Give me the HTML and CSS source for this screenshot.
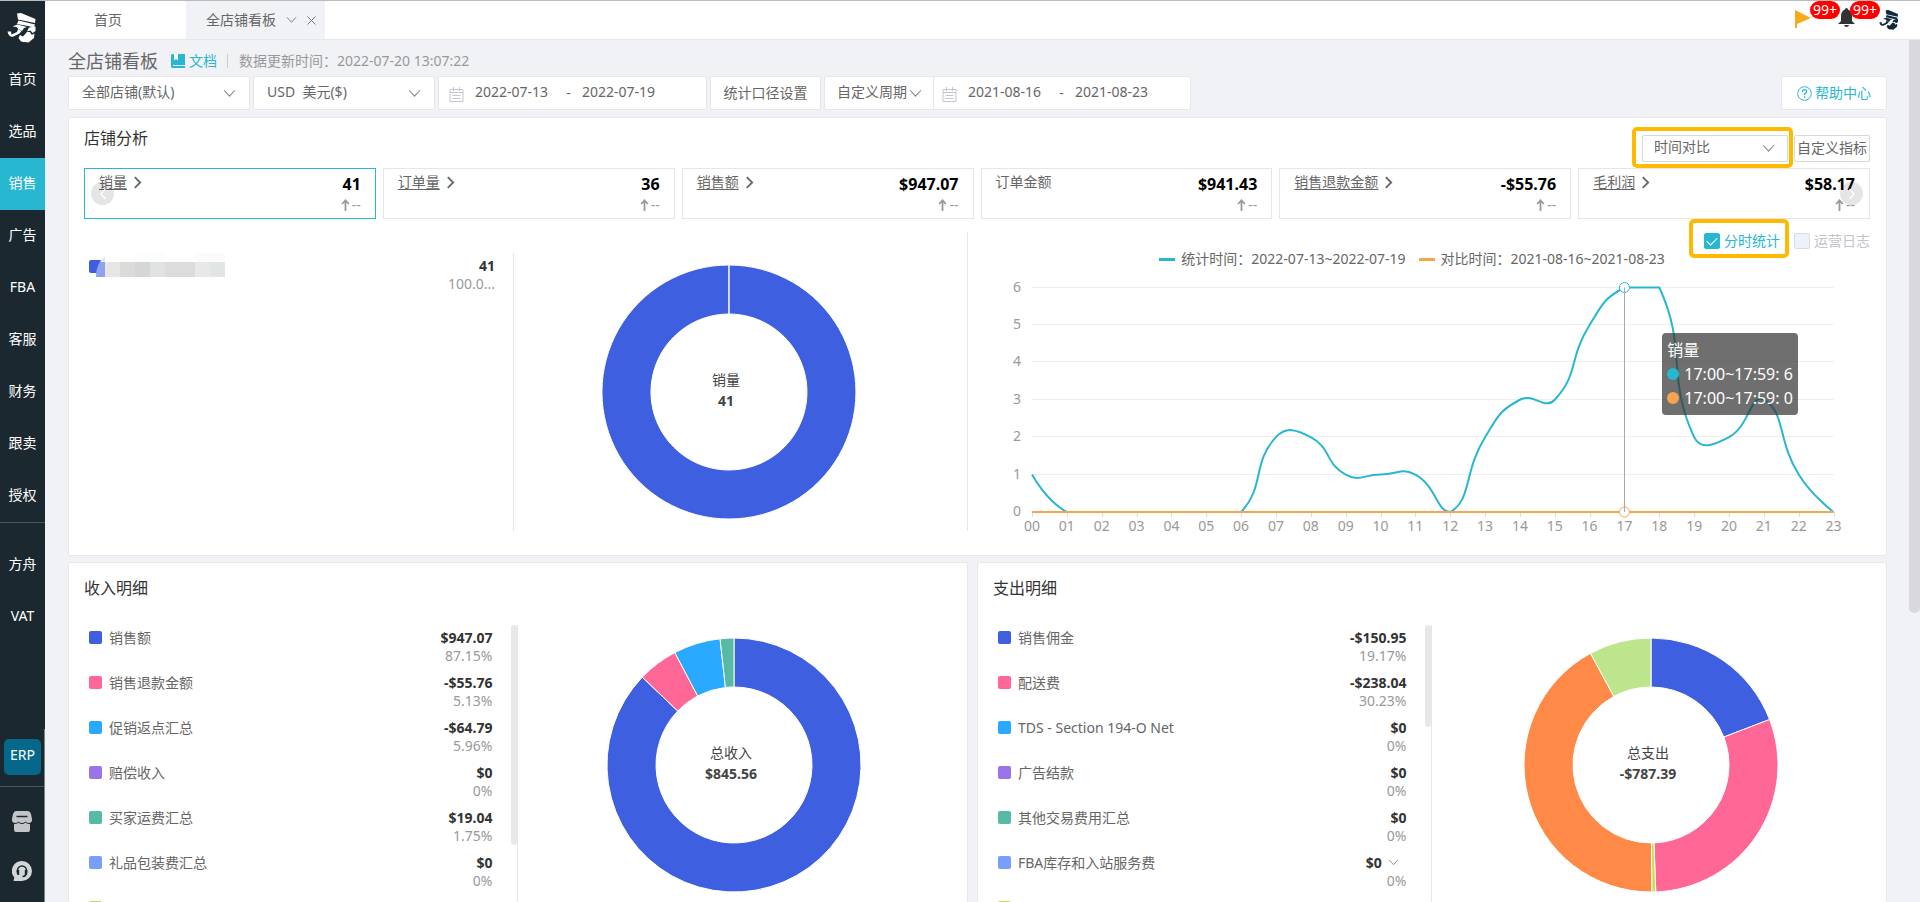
FILE: index.html
```html
<!DOCTYPE html>
<html lang="zh-CN">
<head>
<meta charset="utf-8">
<title>全店铺看板</title>
<link rel="stylesheet" href="styles.css">
</head>
<body>
<svg class="defs" width="0" height="0" aria-hidden="true">
  <symbol id="chevron" viewBox="0 0 12 8"><path d="M1 1l5 5.500l5-5.500" fill="none" stroke="currentColor"/></symbol>
  <symbol id="more" viewBox="0 0 8 12"><path d="M1.500 1l5 5l-5 5" fill="none" stroke="currentColor" stroke-width="1.700"/></symbol>
  <symbol id="up" viewBox="0 0 8 12"><path d="M4 12V1.500M.7 5L4 1.300L7.300 5" fill="none" stroke="currentColor" stroke-width="1.800"/></symbol>
  <symbol id="calendar" viewBox="0 0 15 15"><path d="M1 2.500h13v12H1zM1 5.500h13M4.500 0v4M10.500 0v4M3.500 8.500h8M3.500 11.500h8" fill="none" stroke="currentColor"/></symbol>
  <symbol id="captain" viewBox="0 0 30 30">
    <path fill="currentColor" d="M10 .5L14 0L28.500 6L28 10L11 6.500Z"/>
    <path fill="currentColor" d="M11.500 7.500L28 11.500L27 14.500L21 13L10 11Z"/>
    <path fill="currentColor" d="M5.500 13.500L10.500 11.500L20 14L17 15L15 18L12 16.500L9.500 14Z"/>
    <path fill="currentColor" d="M11 16L14.500 18L12.500 20.500L6.500 23.500C4.500 24.500 1 23 .5 18.500L4 18.500L4.500 21.500L10 19Z"/>
    <path fill="currentColor" d="M22 14.500L28.500 13.500L28.500 18L25.500 20L23.500 17.500L20 18.500Z"/>
    <path fill="currentColor" d="M13 22L16 23.500L20 19L23 19L24.500 22L27.500 20.500L27 25L21.500 29.500L14 28.500L11.500 25Z"/>
    <path d="M16 29L24.500 21.500" stroke="currentColor" stroke-width="1"/>
  </symbol>
</svg>

<nav class="sidebar" aria-label="主菜单">
  <a class="logo" href="#" aria-label="主页"><svg width="30" height="30"><use href="#captain"/></svg></a>
  <a class="nav-item" href="#">首页</a>
  <a class="nav-item" href="#">选品</a>
  <a class="nav-item active" href="#">销售</a>
  <a class="nav-item" href="#">广告</a>
  <a class="nav-item" href="#">FBA</a>
  <a class="nav-item" href="#">客服</a>
  <a class="nav-item" href="#">财务</a>
  <a class="nav-item" href="#">跟卖</a>
  <a class="nav-item" href="#">授权</a>
  <div class="nav-extra">
    <a class="nav-item" href="#">方舟</a>
    <a class="nav-item" href="#">VAT</a>
  </div>
  <div class="nav-foot">
    <a class="erp" href="#">ERP</a>
    <div class="nav-tools">
      <button class="tool" type="button" aria-label="店铺">
        <svg width="20" height="21" viewBox="0 0 20 21"><path fill="#c3c6c9" d="M4 0h12q2 0 3 3l1 5v2q-1 2-3 2q-2 0-3.500-1.500Q12 12 10 12T6.500 10.500Q5 12 3 12Q1 12 0 10V8l1-5q1-3 3-3z"/><path fill="#c3c6c9" d="M2 13q3 0 4.500-1.500Q8 13 10 13t3.500-1.500Q15 13 18 13v6q0 2-2 2H4q-2 0-2-2z"/><path d="M4.500 5.500h11" stroke="#1b2830" stroke-width="1.500"/></svg>
      </button>
      <button class="tool" type="button" aria-label="客服">
        <svg width="20" height="20" viewBox="0 0 20 20"><path fill="#d3d6d8" d="M10 0a10 10 0 1 1 0 20H1.500l.8-3.500A10 10 0 0 1 10 0z"/><path d="M5.500 11V9.500a4.500 4.500 0 0 1 9 0V11c0 3-2 4.500-4 4.500" fill="none" stroke="#1b2830" stroke-width="1.600"/><path d="M4.700 9H7.200v5H6q-1.300-.5-1.300-2zM12.800 9h2.500v3q0 2-1.300 2h-1.200z" fill="#1b2830"/></svg>
      </button>
    </div>
  </div>
</nav>

<div class="shell">
  <header class="topbar">
    <a class="tab" href="#">首页</a>
    <div class="tab current">
      <a href="#">全店铺看板</a>
      <button type="button" aria-label="展开"><svg width="11" height="8"><use href="#chevron"/></svg></button>
      <button type="button" aria-label="关闭"><svg width="9" height="9" viewBox="0 0 9 9"><path d="M.5.5l8 8M8.500.5l-8 8" stroke="currentColor"/></svg></button>
    </div>
    <div class="status">
      <a class="flag" href="#" aria-label="任务"><svg width="16" height="18" viewBox="0 0 16 18"><path fill="#f8a91c" d="M0 0L16 8L2 14V18H0z"/></svg><span class="badge">99+</span></a>
      <a class="bell" href="#" aria-label="通知"><svg width="17" height="19" viewBox="0 0 17 19"><path fill="#333" d="M7 1.500a1.500 1.500 0 0 1 3 0Q14 3 14 8v5l3 3H0l3-3V8Q3 3 7 1.500zM6 17h5q-.5 2-2.500 2T6 17z"/></svg><span class="badge">99+</span></a>
      <a class="avatar" href="#" aria-label="账户"><svg width="20" height="20"><use href="#captain"/></svg></a>
    </div>
  </header>

  <main class="page">
    <div class="page-head">
      <h1>全店铺看板</h1>
      <a class="doc" href="#"><svg width="14" height="14" viewBox="0 0 14 14"><path fill="currentColor" d="M1.500 0H3v6.500l2-1.500l2 1.500V0h7v14H1.500Q0 14 0 12.500v-11Q0 0 1.500 0z"/><path d="M3 0h4v5.500L5 4L3 5.500z" fill="#fff"/><path d="M2 11.500h12" stroke="#f1f2f6"/></svg>文档</a>
      <span class="updated">数据更新时间：2022-07-20 13:07:22</span>
    </div>

    <form class="filters">
      <label class="field pick">
        <select aria-label="店铺"><option>全部店铺(默认)</option></select>
        <svg width="13" height="9"><use href="#chevron"/></svg>
      </label>
      <label class="field pick">
        <select aria-label="币种"><option>USD&nbsp;&nbsp;美元($)</option></select>
        <svg width="13" height="9"><use href="#chevron"/></svg>
      </label>
      <div class="field range main-range">
        <svg width="15" height="15"><use href="#calendar"/></svg>
        <input type="text" value="2022-07-13" aria-label="开始日期"><span>-</span><input type="text" value="2022-07-19" aria-label="结束日期">
      </div>
      <button class="field plain" type="button">统计口径设置</button>
      <div class="period">
        <label class="field pick short">
          <select aria-label="周期"><option>自定义周期</option></select>
          <svg width="13" height="9"><use href="#chevron"/></svg>
        </label>
        <div class="field range">
          <svg width="15" height="15"><use href="#calendar"/></svg>
          <input type="text" value="2021-08-16" aria-label="对比开始日期"><span>-</span><input type="text" value="2021-08-23" aria-label="对比结束日期">
        </div>
      </div>
      <a class="field help" href="#"><svg width="15" height="15" viewBox="0 0 15 15"><circle cx="7.500" cy="7.500" r="6.800" fill="none" stroke="currentColor"/><path d="M5.300 6Q5.300 3.700 7.500 3.700T9.700 5.800Q9.700 7 7.500 8V9.300M7.500 10.300v1.500" fill="none" stroke="currentColor" stroke-width="1.300"/></svg>帮助中心</a>
    </form>

    <section class="panel analysis">
      <div class="panel-head">
        <h2>店铺分析</h2>
        <div class="actions">
          <label class="pick compare marked">
            <select aria-label="对比方式"><option>时间对比</option></select>
            <svg width="13" height="9"><use href="#chevron"/></svg>
          </label>
          <button class="metrics-btn" type="button">自定义指标</button>
        </div>
      </div>

      <div class="cards">
        <article class="card selected"><a href="#"><u>销量</u><svg width="9" height="13"><use href="#more"/></svg></a><div class="figure"><b>41</b><span><svg width="9" height="12"><use href="#up"/></svg>--</span></div></article>
        <article class="card"><a href="#"><u>订单量</u><svg width="9" height="13"><use href="#more"/></svg></a><div class="figure"><b>36</b><span><svg width="9" height="12"><use href="#up"/></svg>--</span></div></article>
        <article class="card"><a href="#"><u>销售额</u><svg width="9" height="13"><use href="#more"/></svg></a><div class="figure"><b>$947.07</b><span><svg width="9" height="12"><use href="#up"/></svg>--</span></div></article>
        <article class="card"><span class="name">订单金额</span><div class="figure"><b>$941.43</b><span><svg width="9" height="12"><use href="#up"/></svg>--</span></div></article>
        <article class="card"><a href="#"><u>销售退款金额</u><svg width="9" height="13"><use href="#more"/></svg></a><div class="figure"><b>-$55.76</b><span><svg width="9" height="12"><use href="#up"/></svg>--</span></div></article>
        <article class="card"><a href="#"><u>毛利润</u><svg width="9" height="13"><use href="#more"/></svg></a><div class="figure"><b>$58.17</b><span><svg width="9" height="12"><use href="#up"/></svg>--</span></div></article>
        <button class="slide prev" type="button" aria-label="上一组"><svg width="6" height="12" viewBox="0 0 6 12"><path d="M5.500 1L1 6l4.500 5" fill="none" stroke="#fff" stroke-width="1.200"/></svg></button>
        <button class="slide next" type="button" aria-label="下一组"><svg width="6" height="12" viewBox="0 0 6 12"><path d="M.5 1L5 6L.5 11" fill="none" stroke="#fff" stroke-width="1.200"/></svg></button>
      </div>

      <div class="analysis-body">
        <div class="split shop-split">
          <ul class="legend-list">
            <li>
              <svg class="masked" width="136" height="30" viewBox="0 0 136 30" role="img" aria-label="店铺名称">
                <rect x="0" y="13" width="13" height="13" rx="2" fill="#3d5fe0"/>
                <path d="M7 30Q7 16 16 10V30z" fill="#8fa2ee"/><path d="M11 15Q13 12 16 10V15z" fill="#e6eafb"/>
                <path fill="#fbfdfc" d="M46 1h30v14H46z"/><path fill="#fbfbfb" d="M106 0h30v15h-30z"/>
                <path fill="#e8e6e4" d="M16 15h15v15H16z"/><path fill="#dbdbd9" d="M31 15h15v15H31z"/><path fill="#d6d6d6" d="M46 15h15v15H46z"/><path fill="#dfe3e3" d="M61 15h15v15H61z"/><path fill="#dcdcdd" d="M76 15h30v15H76z"/><path fill="#e8e8e9" d="M106 15h15v15h-15z"/><path fill="#e2e5e5" d="M121 15h15v15h-15z"/>
              </svg>
              <div class="amount"><b>41</b><span>100.0...</span></div>
            </li>
          </ul>
          <svg class="donut" viewBox="0 0 260 260" data-slices="100:#3d5fe0" data-title="销量" data-total="41"></svg>
        </div>
        <div class="trend">
          <div class="switches">
            <label class="check marked"><input type="checkbox" checked>分时统计</label>
            <label class="check off"><input type="checkbox" disabled>运营日志</label>
          </div>
          <div class="series">
            <span class="now">统计时间：2022-07-13~2022-07-19</span>
            <span class="past">对比时间：2021-08-16~2021-08-23</span>
          </div>
          <div class="plot">
            <svg id="trend" viewBox="0 0 902 272" role="img" aria-label="销量趋势"></svg>
            <div class="tooltip">
              <div>销量</div>
              <div><i class="dot now-dot"></i>17:00~17:59: 6</div>
              <div><i class="dot past-dot"></i>17:00~17:59: 0</div>
            </div>
          </div>
        </div>
      </div>
    </section>

    <div class="details">
      <section class="panel">
        <div class="panel-head"><h2>收入明细</h2></div>
        <div class="split">
          <ul class="legend-list long">
            <li><i class="key blue"></i><span class="label">销售额</span><div class="amount"><b>$947.07</b><span>87.15%</span></div></li>
            <li><i class="key pink"></i><span class="label">销售退款金额</span><div class="amount"><b>-$55.76</b><span>5.13%</span></div></li>
            <li><i class="key sky"></i><span class="label">促销返点汇总</span><div class="amount"><b>-$64.79</b><span>5.96%</span></div></li>
            <li><i class="key purple"></i><span class="label">赔偿收入</span><div class="amount"><b>$0</b><span>0%</span></div></li>
            <li><i class="key green"></i><span class="label">买家运费汇总</span><div class="amount"><b>$19.04</b><span>1.75%</span></div></li>
            <li><i class="key peri"></i><span class="label">礼品包装费汇总</span><div class="amount"><b>$0</b><span>0%</span></div></li>
            <li><i class="key lime"></i><span class="label"></span><div class="amount"><b>$0</b></div></li>
          </ul>
          <svg class="donut" viewBox="0 0 260 260" data-slices="87.15:#3d5fe0,5.13:#ff6896,5.96:#29a9ff,1.75:#56baa5" data-title="总收入" data-total="$845.56"></svg>
        </div>
      </section>
      <section class="panel">
        <div class="panel-head"><h2>支出明细</h2></div>
        <div class="split">
          <ul class="legend-list long costs">
            <li><i class="key blue"></i><span class="label">销售佣金</span><div class="amount"><b>-$150.95</b><span>19.17%</span></div></li>
            <li><i class="key pink"></i><span class="label">配送费</span><div class="amount"><b>-$238.04</b><span>30.23%</span></div></li>
            <li><i class="key sky"></i><span class="label">TDS - Section 194-O Net</span><div class="amount"><b>$0</b><span>0%</span></div></li>
            <li><i class="key purple"></i><span class="label">广告结款</span><div class="amount"><b>$0</b><span>0%</span></div></li>
            <li><i class="key green"></i><span class="label">其他交易费用汇总</span><div class="amount"><b>$0</b><span>0%</span></div></li>
            <li><i class="key peri"></i><span class="label">FBA库存和入站服务费</span><div class="amount"><b>$0 <svg width="11" height="7"><use href="#chevron"/></svg></b><span>0%</span></div></li>
            <li><i class="key lime"></i><span class="label"></span><div class="amount"><b>$0 <svg width="11" height="7"><use href="#chevron"/></svg></b></div></li>
          </ul>
          <svg class="donut" viewBox="0 0 260 260" data-slices="19.17:#3d5fe0,30.23:#ff6896,0.5:#c8dc50,42.2:#ff8a47,7.9:#bce58c" data-title="总支出" data-total="-$787.39"></svg>
        </div>
      </section>
    </div>
  </main>
  <div class="page-thumb"></div>
</div>
<script src="charts.js"></script>
</body>
</html>
```
FILE: styles.css
```css
* { box-sizing: border-box; }

body {
  margin: 0;
  display: flex;
  height: 100vh;
  overflow: hidden;
  background: #f1f2f6;
  color: #666;
  font: 14px/20px "Noto Sans", "Noto Sans CJK SC", sans-serif;
}

a { color: inherit; text-decoration: none; }
h1, h2, ul { margin: 0; padding: 0; font-weight: 400; list-style: none; }
button, input, select { margin: 0; padding: 0; border: 0; background: none; color: inherit; font: inherit; }
svg { flex: none; }
.defs { position: absolute; }

/* sidebar */
.sidebar {
  flex: none;
  width: 45px;
  display: flex;
  flex-direction: column;
  background: #1b2830;
  color: #fff;
  border-top: 1px solid #bbb;
}
.logo { height: 53px; padding: 12px 0 0 7px; }
.nav-item { height: 52px; line-height: 50px; text-align: center; }
.nav-item.active { background: #28b7d0; }
.nav-extra { display: flex; flex-direction: column; border-top: 1px solid #49535a; padding-top: 16px; }
.nav-foot { margin-top: auto; border-right: 1px solid #7b8389; padding-top: 10px; }
.erp {
  display: block;
  height: 36px;
  margin: 0 3px 11px 4px;
  border-radius: 5px;
  background: #05688a;
  line-height: 32px;
  text-align: center;
}
.nav-tools {
  display: flex;
  flex-direction: column;
  align-items: center;
  gap: 29px;
  border-top: 1px solid #49535a;
  padding: 24px 0 21px;
}
.tool { display: flex; }

/* top bar */
.shell { position: relative; flex: 1; min-width: 0; }
.topbar {
  display: flex;
  height: 40px;
  background: #fff;
  border-top: 1px solid #bbb;
  border-bottom: 1px solid #e6e6e8;
}
.tab { display: flex; align-items: center; padding: 0 64px 0 49px; }
.tab.current { gap: 10px; padding: 0 9px 0 20px; background: #f1f2f6; }
.tab button { display: flex; color: #777; }
.status { display: flex; align-items: flex-start; margin-left: auto; padding: 7px 21px 0 0; }
.status a { position: relative; display: flex; color: #10293b; }
.flag { margin: 2px 27px 0 0; }
.bell { margin-right: 24px; }
.avatar { margin-top: 2px; }
.badge {
  position: absolute;
  left: 12px;
  top: -7px;
  width: 30px;
  border-radius: 9px;
  background: #f00;
  color: #fff;
  line-height: 18px;
  text-align: center;
}
.flag .badge { left: 15px; top: -9px; }

/* page heading and filters */
.page { padding: 0 33px 0 23px; }
.page-head { display: flex; align-items: center; height: 36px; padding-top: 5px; }
h1 { font-size: 18px; }
.doc { display: flex; align-items: center; gap: 4px; margin-left: 13px; color: #28b7d0; }
.updated { margin-left: 10px; padding-left: 11px; border-left: 1px solid #ccc; color: #999; line-height: 14px; }

.filters { display: flex; gap: 3px; height: 34px; }
.field { display: flex; align-items: center; background: #fff; border: 1px solid #e6e7ea; border-radius: 2px; }
.pick { position: relative; display: flex; align-items: center; width: 182px; }
.pick select { width: 100%; height: 100%; padding: 0 0 3px 13px; appearance: none; }
.pick svg { position: absolute; right: 13px; color: #888; pointer-events: none; }
.range { padding-left: 10px; }
.range > svg { color: #c3c6d2; margin: 2px 11px 0 0; }
.range input { width: 80px; padding-bottom: 2px; }
.range span { width: 27px; text-align: center; }
.main-range { width: 269px; }
.plain { justify-content: center; width: 111px; }
.period { display: flex; }
.period .range { width: 258px; margin-left: -1px; padding-left: 8px; }
.pick.short { width: 110px; }
.pick.short select { padding-left: 12px; }
.pick.short svg { right: 11px; }
.help { justify-content: center; gap: 3px; width: 106px; margin-left: auto; color: #28b7d0; }

/* panels */
.panel { background: #fff; border: 1px solid #e8e8eb; border-radius: 2px; padding: 0 16px 0 15px; }
.panel-head { display: flex; justify-content: space-between; height: 62px; padding-top: 13px; }
h2 { color: #333; font-size: 16px; line-height: 24px; }
.analysis { margin-top: 7px; padding-bottom: 15px; }
.analysis .panel-head { height: 50px; padding-top: 8px; }
.actions { display: flex; gap: 6px; padding-top: 9px; }
.compare { width: 146px; height: 27px; border: 1px solid #d9d9d9; border-radius: 2px; }
.compare select { padding: 0 0 3px 11px; }
.compare svg { right: 12px; }
.metrics-btn { width: 76px; height: 27px; padding-bottom: 2px; border: 1px solid #d9d9d9; border-radius: 2px; white-space: nowrap; }
.marked { position: relative; }
.marked::after {
  content: "";
  position: absolute;
  inset: -9px -6px -7px -11px;
  border: 4px solid #ffb900;
  border-radius: 5px;
  pointer-events: none;
}

.cards { position: relative; display: grid; grid-template-columns: repeat(6, 1fr); gap: 7px; }
.card { display: flex; justify-content: space-between; height: 51px; padding: 3px 14px; border: 1px solid #e6e6e6; }
.card.selected { border-color: #28b7d0; }
.card a { display: flex; align-items: center; gap: 6px; height: 20px; }
.card u { text-underline-offset: 2px; }
.figure { display: flex; flex-direction: column; align-items: flex-end; padding-top: 2px; }
.figure b { color: #000; font-size: 16px; line-height: 20px; }
.figure span { display: flex; align-items: center; gap: 2px; color: #999; line-height: 22px; }
.slide {
  position: absolute;
  top: 14px;
  width: 23px;
  height: 23px;
  display: flex;
  align-items: center;
  justify-content: center;
  border-radius: 50%;
  background: rgba(0, 0, 0, .1);
}
.prev { left: 7px; }
.next { right: 7px; }

.analysis-body { display: grid; grid-template-columns: 884fr 902fr; align-items: start; padding-top: 13px; }
.split { display: grid; grid-template-columns: 1fr 1fr; align-items: center; height: 280px; }
.shop-split { height: 299px; padding: 21px 23px 0 0; border-right: 1px solid #e6e6e6; }
.legend-list { position: relative; height: 100%; overflow: hidden; border-right: 1px solid #e6e6e6; }
.legend-list li { display: flex; height: 45px; padding: 4px 24px 0 5px; line-height: 18px; }
.shop-split .legend-list li { padding-right: 18px; }
.masked { margin-top: -10px; }
.key { flex: none; width: 13px; height: 13px; margin: 2px 7px 0 0; border-radius: 2px; }
.amount { display: flex; flex-direction: column; align-items: flex-end; margin-left: auto; color: #999; }
.amount b { color: #333; }
.amount svg { margin: 0 8px 2px 2px; color: #888; }
.long::after {
  content: "";
  position: absolute;
  top: 0;
  right: 0;
  width: 6px;
  height: 220px;
  border-radius: 3px;
  background: #e8e8e8;
}
.costs::after { height: 102px; }
.blue { background: #3d5fe0; }
.pink { background: #ff6896; }
.sky { background: #29a9ff; }
.purple { background: #9a73e8; }
.green { background: #56baa5; }
.peri { background: #789eff; }
.lime { background: #c8dc50; }

.donut { justify-self: center; width: 260px; height: 260px; }
.donut text { fill: #444; text-anchor: middle; }
.donut .total { font-weight: 700; }

/* trend chart */
.switches { display: flex; justify-content: flex-end; gap: 14px; height: 18px; }
.check { display: flex; align-items: center; gap: 4px; line-height: 18px; color: #28b7d0; }
.check.marked::after { inset: -13px -9px -8px -15px; }
.check.off { color: #c0c4cc; }
.check input { appearance: none; width: 16px; height: 16px; border: 1px solid #d8dcea; border-radius: 2px; background: #edf1fc; }
.check input:checked { display: grid; place-items: center; border-color: #28b7d0; background: #28b7d0; }
.check input:checked::before {
  content: "";
  width: 5px;
  height: 9px;
  margin-bottom: 2px;
  border: solid #fff;
  border-width: 0 1px 1px 0;
  transform: rotate(45deg);
}
.series { display: flex; justify-content: center; gap: 13px; padding-right: 14px; line-height: 18px; }
.series span { display: flex; align-items: center; gap: 6px; }
.series span::before { content: ""; width: 16px; height: 3px; background: #28b7d0; }
.series .past::before { background: #f7a44f; }
.plot { position: relative; }
.plot > svg { display: block; width: 100%; }
.plot text { fill: #999; text-anchor: middle; }
.tooltip {
  position: absolute;
  right: 8%;
  top: 24%;
  padding: 5px;
  border-radius: 4px;
  background: rgba(50, 50, 50, .7);
  color: #fff;
  font-size: 16px;
  line-height: 24px;
  white-space: nowrap;
}
.dot { display: inline-block; width: 12px; height: 12px; margin-right: 5px; border-radius: 50%; }
.now-dot { background: #28b7d0; }
.past-dot { background: #f7a44f; }

.details { display: grid; grid-template-columns: 900fr 910fr; gap: 9px; margin-top: 6px; }
.page-thumb {
  position: absolute;
  top: 40px;
  right: 0;
  width: 11px;
  height: 573px;
  border-radius: 0 0 5px 5px;
  background: #d8d8dd;
}
```
FILE: charts.js
```js
const NS = "http://www.w3.org/2000/svg";

function add(parent, name, attrs, text) {
  const el = document.createElementNS(NS, name);
  for (const key in attrs) el.setAttribute(key, attrs[key]);
  if (text !== undefined) el.textContent = text;
  parent.appendChild(el);
  return el;
}

// Ring charts: slices run clockwise from twelve o'clock.
document.querySelectorAll(".donut").forEach((svg) => {
  const c = 130, outer = 127, inner = 78;
  const slices = svg.dataset.slices.split(",").map((s) => s.split(":"));
  const sum = slices.reduce((t, s) => t + Number(s[0]), 0);
  const at = (r, turn) => {
    const a = turn * 2 * Math.PI;
    return (c + r * Math.sin(a)).toFixed(2) + " " + (c - r * Math.cos(a)).toFixed(2);
  };
  let from = 0;
  slices.forEach(([value, color]) => {
    const to = from + Math.min(Number(value) / sum, 0.9999);
    const large = to - from > 0.5 ? 1 : 0;
    add(svg, "path", {
      d: `M${at(outer, from)}A${outer} ${outer} 0 ${large} 1 ${at(outer, to)}L${at(inner, to)}A${inner} ${inner} 0 ${large} 0 ${at(inner, from)}Z`,
      fill: color, stroke: "#fff", "stroke-width": 1
    });
    from = to;
  });
  add(svg, "text", { x: c - 3, y: c - 7 }, svg.dataset.title);
  add(svg, "text", { x: c - 3, y: c + 14, class: "total" }, svg.dataset.total);
});

// Hourly sales line.
const chart = document.getElementById("trend");
const hours = [1, 0, 0, 0, 0, 0, 0, 2, 2, 1, 1, 1, 0, 2, 3, 3, 5, 6, 6, 2, 2, 3, 1, 0];
const left = 64, step = 34.85, top6 = 19.5, base = 244;
const px = (i) => left + i * step;
const py = (v) => base - v * (base - top6) / 6;

for (let v = 0; v <= 6; v++) {
  const y = Math.round(py(v)) - 0.5;
  add(chart, "path", { d: `M${left} ${y}H${px(23)}`, stroke: "#eee" });
  add(chart, "text", { x: 49, y: py(v) + 4 }, v);
}
hours.forEach((v, i) => {
  const x = Math.round(px(i)) + 0.5;
  add(chart, "path", { d: `M${x} ${base}v5`, stroke: "#ddd" });
  add(chart, "text", { x: px(i), y: 263 }, String(i).padStart(2, "0"));
});

// Smoothed path; control points stay inside the value range.
const pts = hours.map((v, i) => [px(i), py(v)]);
const clamp = (y) => Math.max(py(6), Math.min(base, y));
const dist = (a, b) => Math.hypot(a[0] - b[0], a[1] - b[1]);
let d = `M${pts[0]}`;
let lead = pts[0];
for (let i = 1; i < pts.length; i++) {
  const p = pts[i], prev = pts[i - 1], next = pts[i + 1];
  let inn = p, out = p;
  if (next) {
    const ratio = dist(p, next) / (dist(p, next) + dist(p, prev));
    const vx = next[0] - prev[0], vy = next[1] - prev[1];
    inn = [p[0] - vx * 0.5 * (1 - ratio), clamp(p[1] - vy * 0.5 * (1 - ratio))];
    out = [p[0] + vx * 0.5 * ratio, clamp(p[1] + vy * 0.5 * ratio)];
  }
  d += `C${lead} ${inn} ${p}`;
  lead = out;
}
add(chart, "path", { d, fill: "none", stroke: "#28b7d0", "stroke-width": 2 });
add(chart, "path", { d: `M${left} ${base}H${px(23)}`, stroke: "#f7a44f", "stroke-width": 2 });
add(chart, "circle", { cx: px(17), cy: py(6), r: 5, fill: "#fff", stroke: "#28b7d0" });
add(chart, "circle", { cx: px(17), cy: base, r: 5, fill: "#fff", stroke: "#f7a44f" });
add(chart, "path", { d: `M${Math.round(px(17)) + 0.5} ${py(6)}V${base}`, stroke: "#aaa" });
```
